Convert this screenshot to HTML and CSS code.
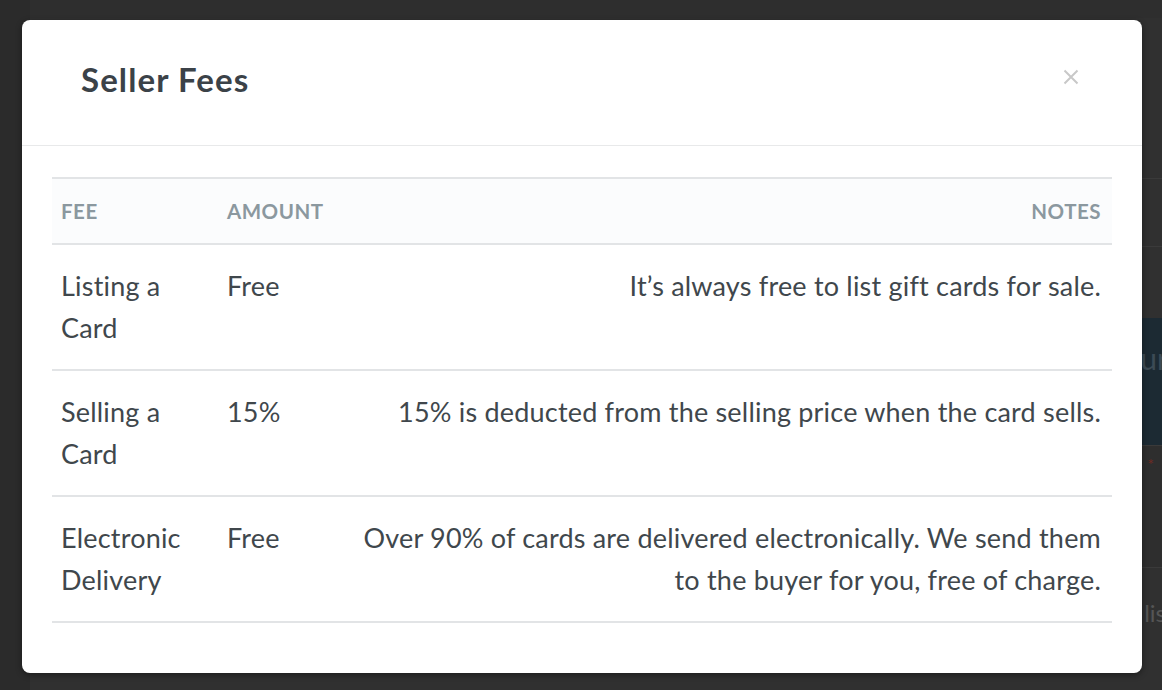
FILE: index.html
```html
<!DOCTYPE html>
<html lang="en">
<head>
<meta charset="utf-8">
<title>Seller Fees</title>
<link rel="stylesheet" href="styles.css">
</head>
<body>
<div class="page">
  <div class="page-side"></div>
  <div class="page-main">
    <div class="bg-top"></div>
    <div class="bg-row bg-row-a"></div>
    <div class="bg-row bg-row-b"></div>
    <div class="bg-banner"><span class="bg-banner-text">ur</span></div>
    <div class="bg-row bg-row-c"><span class="bg-star">*</span></div>
    <div class="bg-row bg-row-d"><span class="bg-text">lis</span></div>
  </div>
</div>
<div class="overlay">
  <div class="modal">
    <div class="modal-header">
      <h2 class="modal-title">Seller Fees</h2>
      <button class="modal-close" aria-label="Close">
        <svg width="16" height="16" viewBox="0 0 16 16"><path d="M1.5 1.5 L14.5 14.5 M14.5 1.5 L1.5 14.5" stroke="#c8c8c8" stroke-width="2" fill="none"/></svg>
      </button>
    </div>
    <div class="modal-body">
      <table class="fees">
        <colgroup>
          <col class="col-fee">
          <col class="col-amount">
          <col>
        </colgroup>
        <thead>
          <tr>
            <th>Fee</th>
            <th>Amount</th>
            <th class="notes">Notes</th>
          </tr>
        </thead>
        <tbody>
          <tr>
            <td>Listing a Card</td>
            <td>Free</td>
            <td class="notes">It’s always free to list gift cards for sale.</td>
          </tr>
          <tr>
            <td>Selling a Card</td>
            <td>15%</td>
            <td class="notes">15% is deducted from the selling price when the card sells.</td>
          </tr>
          <tr>
            <td>Electronic Delivery</td>
            <td>Free</td>
            <td class="notes">Over 90% of cards are delivered electronically. We send them to the buyer for you, free of charge.</td>
          </tr>
        </tbody>
      </table>
    </div>
  </div>
</div>
</body>
</html>
```

FILE: styles.css
```css
* { box-sizing: border-box; }
html, body { margin: 0; padding: 0; }
body {
  width: 1162px;
  height: 690px;
  overflow: hidden;
  background: #303030;
  font-family: Lato, "Open Sans", sans-serif;
  position: relative;
}
.page {
  display: flex;
  height: 690px;
}
.page-side {
  width: 30px;
  background: #2b2b2b;
}
.page-main {
  flex: 1;
  display: flex;
  flex-direction: column;
}
.bg-top {
  height: 18px;
  background: #2e2e2e;
  margin-bottom: 160px;
}
.bg-row {
  border-top: 1px solid #3a3a3a;
}
.bg-row-a { height: 68px; }
.bg-row-b { height: 72px; }
.bg-banner {
  height: 127px;
  background: #1c2a33;
  display: flex;
  align-items: flex-start;
  justify-content: flex-end;
  padding-top: 22px;
}
.bg-banner-text {
  color: #3c4b55;
  font-size: 30px;
  margin-right: -6px;
}
.bg-row-c {
  height: 122px;
  background: #2e2e2e;
  display: flex;
  justify-content: flex-end;
  padding-right: 8px;
  padding-top: 8px;
}
.bg-star { color: #6e2a22; font-size: 16px; }
.bg-row-d {
  flex: 1;
  display: flex;
  justify-content: flex-end;
  padding-top: 30px;
}
.bg-text { color: #555; font-size: 24px; margin-right: -4px; }

.overlay {
  position: absolute;
  inset: 0;
  padding: 20px 20px 17px 22px;
  display: flex;
}
.modal {
  flex: 1;
  background: #fff;
  border-radius: 8px;
  box-shadow: 0 2px 6px rgba(0,0,0,0.4);
  display: flex;
  flex-direction: column;
}
.modal-header {
  height: 126px;
  border-bottom: 1px solid #e8e9ea;
  display: flex;
  align-items: center;
  justify-content: space-between;
  padding: 0 63px 8px 59px;
}
.modal-title {
  margin: 0;
  font-size: 33px;
  font-weight: 700;
  color: #3b4248;
  letter-spacing: 1.1px;
}
.modal-close {
  border: 0;
  background: none;
  padding: 0;
  width: 16px;
  height: 16px;
  display: flex;
  margin-top: -4px;
}
.modal-body {
  padding: 31px 30px 0 30px;
}
.fees {
  width: 100%;
  table-layout: fixed;
  border-collapse: collapse;
  color: #40474c;
}
.col-fee { width: 166px; }
.col-amount { width: 127px; }
.fees thead tr {
  background: #fbfcfd;
  border-top: 2px solid #e2e4e6;
  border-bottom: 2px solid #e2e4e6;
}
.fees th {
  height: 66px;
  text-transform: uppercase;
  font-size: 20.5px;
  font-weight: 700;
  letter-spacing: 0.5px;
  color: #8b989f;
  text-align: left;
  padding: 0 9px;
  vertical-align: middle;
}
.fees td {
  font-size: 27px;
  line-height: 42px;
  letter-spacing: 0.2px;
  padding: 20px 9px 20px 9px;
  vertical-align: top;
  font-weight: 400;
}
.fees tbody tr {
  border-bottom: 2px solid #e2e4e6;
}
.fees .notes { text-align: right; padding-right: 11px; }
```
